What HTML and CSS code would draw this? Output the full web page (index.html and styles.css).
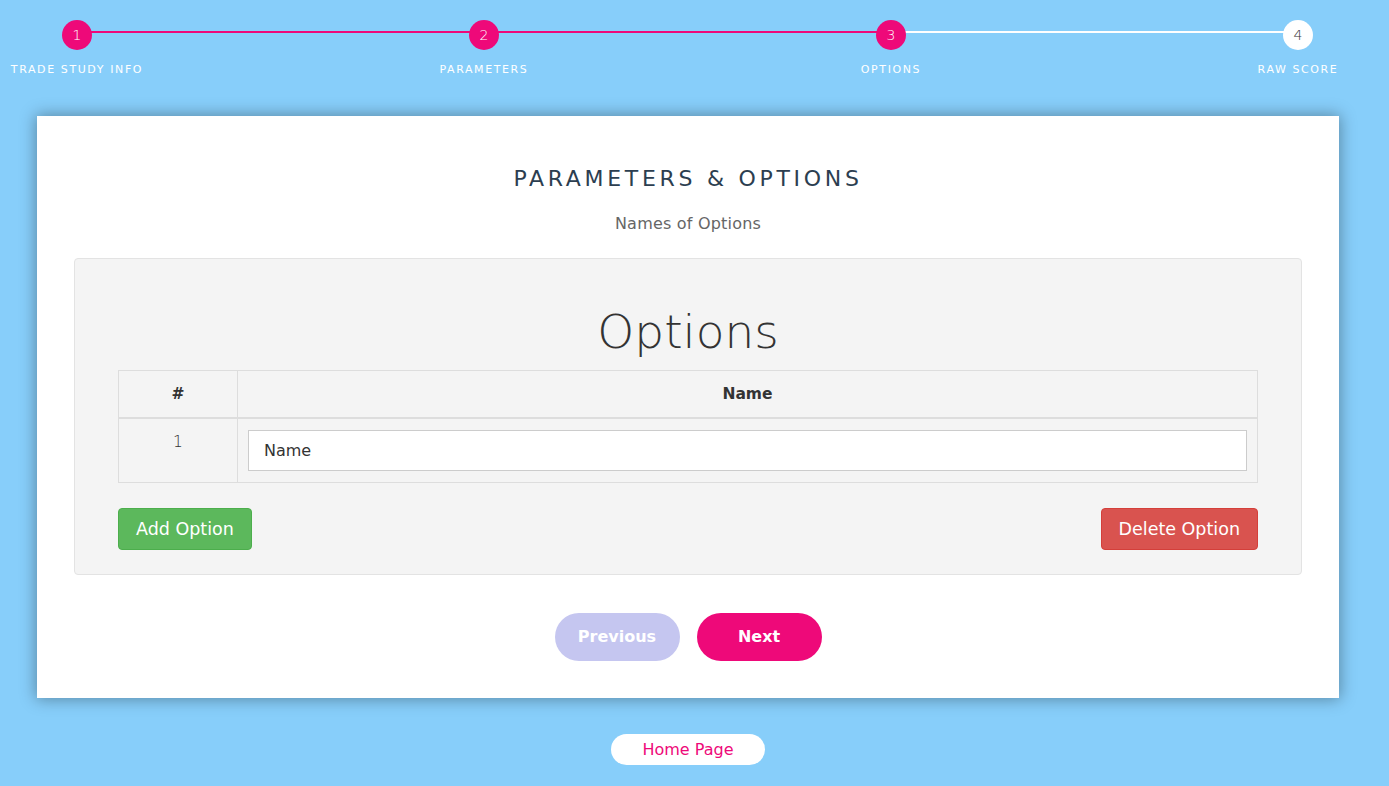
FILE: index.html
```html
<!DOCTYPE html>
<html lang="en">
<head>
<meta charset="utf-8">
<title>Trade Study - Options</title>
<link rel="stylesheet" href="styles.css">
</head>
<body>
<div class="page">
  <ul class="progress">
    <li class="step done line-pink"><span class="dot">1</span><span class="label">Trade Study Info</span></li>
    <li class="step done line-pink"><span class="dot">2</span><span class="label">Parameters</span></li>
    <li class="step done line-white"><span class="dot">3</span><span class="label">Options</span></li>
    <li class="step"><span class="dot">4</span><span class="label">Raw Score</span></li>
  </ul>

  <section class="card">
    <h2 class="card-title">PARAMETERS &amp; OPTIONS</h2>
    <p class="card-sub">Names of Options</p>

    <div class="well">
      <h1 class="well-title">Options</h1>
      <table class="opt-table">
        <thead>
          <tr><th class="col-num">#</th><th>Name</th></tr>
        </thead>
        <tbody>
          <tr><td class="col-num">1</td><td><input class="name-input" type="text" placeholder="Name"></td></tr>
        </tbody>
      </table>
      <div class="well-actions">
        <button class="btn btn-green">Add Option</button>
        <button class="btn btn-red">Delete Option</button>
      </div>
    </div>

    <div class="nav-buttons">
      <button class="pill pill-prev">Previous</button>
      <button class="pill pill-next">Next</button>
    </div>
  </section>

  <div class="home-row">
    <button class="home-btn">Home Page</button>
  </div>
</div>
</body>
</html>
```

FILE: styles.css
```css
* { box-sizing: border-box; }

html, body {
  margin: 0;
  padding: 0;
  background: #87cefa;
  font-family: "DejaVu Sans", "Noto Sans", sans-serif;
}

.page {
  width: 1376px;
  padding-bottom: 20px;
}

/* progress bar */
.progress {
  list-style: none;
  margin: 0;
  padding: 20px 0 0;
  display: flex;
  gap: 253px;
  height: 116px;
}

.step {
  position: relative;
  width: 154px;
  display: flex;
  flex-direction: column;
  align-items: center;
}

.step.line-pink::after,
.step.line-white::after {
  content: "";
  position: absolute;
  top: 11px;
  left: 77px;
  width: 407px;
  height: 2px;
  z-index: 0;
}
.step.line-pink::after { background: #ee0979; }
.step.line-white::after { background: #ffffff; }

.dot {
  position: relative;
  z-index: 1;
  width: 30px;
  height: 30px;
  border-radius: 50%;
  background: #ffffff;
  color: #333;
  font-size: 14px;
  font-weight: 300;
  line-height: 30px;
  text-align: center;
}
.step.done .dot {
  background: #ee0979;
  color: #fff;
}

.label {
  margin-top: 13px;
  font-size: 11px;
  letter-spacing: 1.6px;
  text-transform: uppercase;
  color: #fff;
  white-space: nowrap;
}

/* card */
.card {
  margin: 0 37px;
  background: #fff;
  box-shadow: 0 0 15px 1px rgba(0, 0, 0, 0.35);
  padding: 50px 37px 37px;
}

.card-title {
  margin: 0;
  text-align: center;
  font-size: 22px;
  font-weight: normal;
  letter-spacing: 3.7px;
  color: #2c3e50;
  line-height: 26px;
}

.card-sub {
  margin: 23px 0 25px;
  text-align: center;
  font-size: 16px;
  letter-spacing: 0.2px;
  color: #666;
  line-height: 18px;
}

.well {
  background: #f4f4f4;
  border: 1px solid #e3e3e3;
  border-radius: 4px;
  padding: 44px 43px 24px;
}

.well-title {
  margin: 0 0 10px;
  text-align: center;
  font-size: 47px;
  font-weight: 300;
  color: #333;
  line-height: 57px;
}

.opt-table {
  width: 100%;
  border-collapse: collapse;
  border: 1px solid #ddd;
}
.opt-table th {
  height: 47px;
  border: 1px solid #ddd;
  border-bottom: 2px solid #ddd;
  font-size: 15.5px;
  font-weight: 600;
  color: #333;
  text-align: center;
}
.opt-table td {
  border: 1px solid #ddd;
  padding: 11px 10px;
  height: 64px;
  text-align: center;
  vertical-align: top;
  font-size: 15.5px;
  color: #333;
}
.opt-table .col-num { width: 119px; }
.opt-table td.col-num { padding-top: 14px; font-weight: 300; }

.name-input {
  display: block;
  width: 100%;
  height: 41px;
  border: 1px solid #ccc;
  background: #fff;
  padding: 0 15px;
  font-family: inherit;
  font-size: 16px;
  color: #333;
}
.name-input::placeholder { color: #333; opacity: 1; }

.well-actions {
  display: flex;
  justify-content: space-between;
  margin-top: 25px;
}

.btn {
  height: 42px;
  padding: 0 17px;
  border-radius: 4px;
  border: 1px solid transparent;
  font-family: inherit;
  font-size: 17.5px;
  color: #fff;
}
.btn-green { background: #5cb85c; border-color: #4cae4c; }
.btn-red { background: #d9534f; border-color: #d43f3a; }

.nav-buttons {
  display: flex;
  justify-content: center;
  gap: 17px;
  margin-top: 38px;
}

.pill {
  width: 125px;
  height: 48px;
  border: none;
  border-radius: 24px;
  font-family: inherit;
  font-size: 16px;
  font-weight: bold;
  color: #fff;
}
.pill-prev { background: #c5c6f0; }
.pill-next { background: #ee0979; }

.home-row {
  display: flex;
  justify-content: center;
  margin-top: 36px;
}

.home-btn {
  width: 154px;
  height: 31px;
  border: none;
  border-radius: 16px;
  background: #fff;
  color: #ee0979;
  font-family: inherit;
  font-size: 16px;
}
```
